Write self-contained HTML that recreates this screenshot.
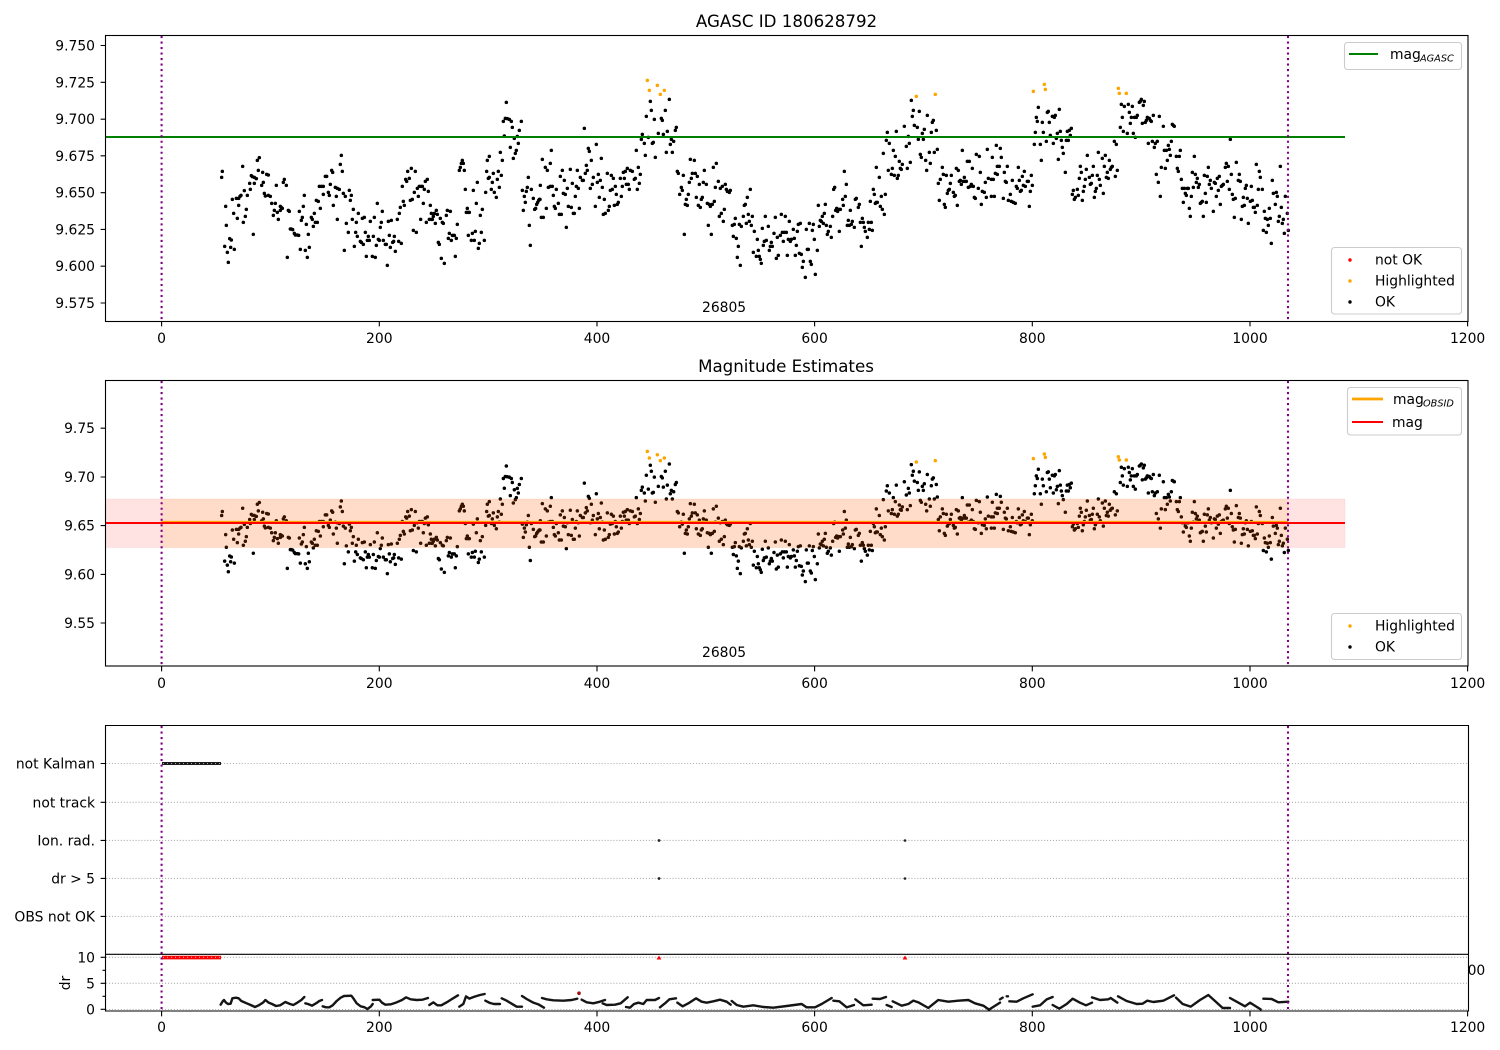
<!DOCTYPE html>
<html><head><meta charset="utf-8"><title>AGASC ID 180628792</title>
<style>
html,body{margin:0;padding:0;background:#fff}
svg{display:block}
text{font-family:"DejaVu Sans","Liberation Sans",sans-serif;font-size:13.89px;fill:#000}
.e{text-anchor:end}.m{text-anchor:middle}
.sub{font-size:9.72px;font-style:italic}
.d{fill:none;stroke-linecap:round;vector-effect:non-scaling-stroke;stroke-width:3.5}
.tr{fill:none;stroke:#151515;stroke-width:2.4;stroke-linecap:round;stroke-linejoin:round;vector-effect:non-scaling-stroke}
.t{stroke:#000;stroke-width:1.1;fill:none}
.f{fill:none;stroke:#000;stroke-width:1.1}
.g{stroke:#b0b0b0;stroke-width:1.1;stroke-dasharray:1.1 1.85;fill:none}
.o{stroke:#800080;stroke-width:2.08;stroke-dasharray:2.08 3.43;fill:none}
.l{fill:#fff;fill-opacity:.8;stroke:#ccc;stroke-width:1.1}
</style></head><body>
<svg xmlns="http://www.w3.org/2000/svg" width="1500" height="1050" viewBox="0 0 1500 1050">
<rect width="1500" height="1050" fill="#fff"/>
<defs>
<g id="ok" stroke="#000">
<path class="d" transform="translate(100 60) scale(.33333)" d="M365 352h0M367 334h0M377 439h0M379 496h0M389 536h0M394 540h0M374 559h0M392 562h0M403 568h0M382 577h0M385 607h0M397 418h0M409 415h0M416 415h0M416 436h0M401 460h0M412 475h0M423 406h0M420 409h0M428 319h0M433 392h0M442 406h0M439 448h0M436 469h0M430 487h0M460 523h0M449 370h0M451 388h0M454 347h0M457 350h0M463 352h0M463 370h0M469 356h0M472 301h0M478 293h0M475 331h0M488 337h0M490 367h0M485 376h0M500 343h0M505 345h0M493 400h0M496 408h0M505 406h0M511 409h0M515 430h0M526 430h0M523 451h0M520 466h0M532 457h0M535 478h0M529 376h0M550 367h0M553 358h0M559 376h0M541 439h0M544 442h0M547 445h0M541 451h0M565 451h0M568 454h0M562 592h0M571 507h0M574 507h0M578 509h0M583 520h0M586 525h0M592 525h0M596 526h0M598 454h0M601 568h0M610 439h0M613 406h0M607 472h0M604 481h0M619 493h0M625 523h0M628 562h0M616 571h0M622 592h0M634 472h0M637 478h0M643 460h0M640 499h0M646 487h0M652 487h0M649 421h0M655 424h0M661 445h0M658 379h0M664 379h0M670 379h0M670 403h0M676 349h0M680 349h0M685 397h0M688 406h0M691 373h0M695 331h0M698 337h0M700 436h0M706 382h0M709 409h0M712 385h0M718 388h0M712 478h0M721 313h0M724 286h0M727 334h0M730 400h0M733 571h0M736 409h0M739 490h0M745 517h0M748 391h0M751 421h0M754 406h0M757 478h0M760 448h0M763 559h0M767 517h0M769 487h0M772 529h0M775 460h0M781 544h0M784 547h0M790 553h0M787 475h0M793 472h0M796 517h0M799 589h0M802 541h0M805 529h0M808 541h0M811 484h0M817 589h0M820 529h0M823 472h0M826 592h0M829 556h0M832 430h0M835 538h0M838 541h0M841 502h0M844 487h0M847 454h0M850 541h0M856 553h0M859 553h0M862 616h0M865 484h0M868 526h0M871 562h0M874 481h0M878 547h0M881 544h0M883 529h0M886 574h0M892 478h0M896 544h0M898 460h0M901 442h0M904 550h0M907 379h0M910 424h0M913 436h0M917 358h0M920 364h0M923 334h0M928 355h0M931 421h0M934 325h0M937 418h0M940 511h0M943 397h0M946 334h0M949 517h0M952 385h0M955 409h0M958 379h0M962 478h0M964 379h0M967 379h0M970 430h0M973 388h0M976 364h0M979 487h0M982 358h0M985 394h0M988 478h0M991 436h0M994 478h0M994 460h0M997 478h0M1000 469h0M1003 460h0M1006 490h0M1009 451h0M1012 463h0M1015 547h0M1018 553h0M1021 475h0M1024 595h0M1027 487h0M1030 490h0M1033 610h0M1039 466h0M1042 451h0M1045 535h0M1048 520h0M1051 454h0M1054 541h0M1057 526h0M1060 526h0M1063 526h0M1066 589h0M1069 535h0M1072 493h0M1078 331h0M1081 322h0M1084 310h0M1087 301h0M1090 310h0M1093 331h0M1096 388h0M1102 445h0M1099 457h0M1105 457h0M1108 457h0M1105 526h0M1114 541h0M1117 520h0M1120 391h0M1123 541h0M1126 514h0M1129 430h0M1132 367h0M1135 565h0M1138 550h0M1141 466h0M1144 517h0M1147 448h0M1153 541h0M1157 397h0M1160 334h0M1162 301h0M1165 355h0M1168 289h0M1168 352h0M1174 388h0M1177 367h0M1180 340h0M1183 397h0M1189 412h0M1192 358h0M1195 334h0M1198 382h0M1201 277h0M1204 346h0M1207 301h0M1210 184h0M1213 228h0M1216 175h0M1219 127h0M1222 176h0M1228 178h0M1234 184h0M1231 262h0M1237 202h0M1240 295h0M1243 235h0M1246 280h0M1249 271h0M1252 229h0M1255 250h0M1258 211h0M1264 184h0M1267 391h0M1270 451h0M1273 409h0M1276 427h0M1279 394h0M1282 382h0M1285 352h0M1288 496h0M1291 556h0M1294 388h0M1300 415h0M1304 448h0M1307 445h0M1310 433h0M1313 427h0M1316 421h0M1318 418h0"/>
<path class="d" transform="translate(540 60) scale(.33333)" d="M1 376h0M0 418h0M7 298h0M16 322h0M22 331h0M31 310h0M34 271h0M25 382h0M31 379h0M37 379h0M40 406h0M49 388h0M19 445h0M43 439h0M46 445h0M55 430h0M4 472h0M10 472h0M58 463h0M64 463h0M79 502h0M61 349h0M67 331h0M73 361h0M82 385h0M70 400h0M76 403h0M91 328h0M97 370h0M85 439h0M94 442h0M100 460h0M103 460h0M106 409h0M109 379h0M115 385h0M112 331h0M118 445h0M121 352h0M127 361h0M130 361h0M133 205h0M136 340h0M139 316h0M142 331h0M145 265h0M148 274h0M151 385h0M154 301h0M157 373h0M160 352h0M166 439h0M169 253h0M172 367h0M175 343h0M178 412h0M181 361h0M184 295h0M187 382h0M190 463h0M196 460h0M193 418h0M202 340h0M205 451h0M208 439h0M211 391h0M214 346h0M217 388h0M220 355h0M223 436h0M226 379h0M229 403h0M232 433h0M235 427h0M241 355h0M244 409h0M247 379h0M250 337h0M253 355h0M256 334h0M259 373h0M262 325h0M265 373h0M268 388h0M271 331h0M277 334h0M283 358h0M286 355h0M289 271h0M292 388h0M295 322h0M298 370h0M301 343h0M304 238h0M307 223h0M313 250h0M316 286h0M319 169h0M325 232h0M331 124h0M334 151h0M337 250h0M340 247h0M343 178h0M346 292h0M355 220h0M364 175h0M367 181h0M370 223h0M376 151h0M379 277h0M382 214h0M388 118h0M391 253h0M394 238h0M397 277h0M401 244h0M406 211h0M409 202h0M412 334h0M415 340h0M419 403h0M424 382h0M427 391h0M430 346h0M433 523h0M439 418h0M436 433h0M442 436h0M445 403h0M448 367h0M451 298h0M454 355h0M457 340h0M463 301h0M466 340h0M469 412h0M472 349h0M475 436h0M478 373h0M481 442h0M484 418h0M487 412h0M490 367h0M493 331h0M499 373h0M502 430h0M505 496h0M508 433h0M511 439h0M514 523h0M517 433h0M520 322h0M523 424h0M526 382h0M529 310h0M535 364h0M538 469h0M541 385h0M544 460h0M547 379h0M550 484h0M553 448h0M556 373h0M559 388h0M562 394h0M568 397h0M571 391h0M577 496h0M580 529h0M583 493h0M586 475h0M589 535h0M592 592h0M595 559h0M598 493h0M601 616h0M604 499h0M610 469h0M613 436h0M616 433h0M619 490h0M622 412h0M625 463h0M628 484h0M631 388h0M634 496h0M637 469h0M640 577h0M643 514h0M649 589h0M652 538h0M655 571h0M658 589h0M661 598h0M664 610h0M667 505h0M670 556h0M673 544h0M676 469h0M679 541h0M685 499h0M688 571h0M691 559h0M694 547h0M697 559h0M702 520h0M706 472h0M709 595h0M712 532h0M715 586h0M721 526h0M724 463h0M727 517h0M730 544h0M733 517h0M736 469h0M739 517h0M742 586h0M745 538h0M748 484h0M751 544h0M754 538h0M760 508h0M763 535h0M766 586h0M769 556h0M772 514h0M775 493h0M778 580h0M781 490h0M784 583h0M787 622h0M790 604h0M796 652h0M799 508h0M802 568h0M805 568h0M808 490h0M811 604h0M814 613h0M817 511h0M820 493h0M823 538h0M826 643h0M832 571h0M835 436h0M838 499h0M841 481h0M844 484h0M847 469h0M850 490h0M853 460h0M856 433h0M859 496h0M862 523h0M865 514h0M871 499h0M874 532h0M878 469h0M881 388h0M884 382h0M887 451h0M890 445h0M893 454h0M896 448h0M898 514h0M901 448h0M908 418h0M910 436h0M913 334h0M916 409h0M919 373h0M922 496h0M925 481h0M928 496h0M931 451h0M934 493h0M937 484h0M943 502h0M946 418h0M949 415h0M955 442h0M958 433h0M961 487h0M964 559h0M967 475h0M970 487h0M973 502h0M976 514h0M982 532h0M985 487h0M988 508h0M991 424h0M994 487h0M997 511h0M1000 388h0M1003 403h0M1006 430h0M1009 427h0M1012 427h0M1018 352h0M1009 322h0M1021 439h0M1024 409h0M1027 448h0M1030 280h0M1033 463h0M1036 403h0M1039 241h0M1042 217h0M1045 331h0M1048 250h0M1054 343h0M1057 325h0M1060 271h0M1063 346h0M1066 289h0M1069 214h0M1072 355h0M1075 346h0M1078 304h0M1081 325h0M1084 328h0M1087 313h0M1093 199h0M1099 259h0M1102 325h0M1105 229h0M1108 250h0M1111 307h0M1114 121h0M1117 169h0M1120 151h0M1123 196h0M1132 202h0M1135 238h0M1138 154h0M1141 283h0M1144 292h0M1147 220h0M1150 238h0M1153 208h0M1157 301h0M1160 331h0M1162 166h0M1168 277h0M1171 310h0M1174 217h0M1177 187h0M1180 181h0M1183 277h0M1189 211h0M1192 268h0M1195 370h0M1198 421h0M1201 358h0M1207 322h0M1210 343h0M1213 433h0M1216 442h0M1219 346h0M1222 400h0M1225 391h0M1228 388h0M1231 370h0M1234 346h0M1240 397h0M1243 409h0M1246 406h0M1249 325h0M1252 436h0M1255 331h0M1258 364h0M1261 361h0M1264 373h0M1267 271h0M1270 364h0M1273 352h0M1276 364h0M1279 364h0M1282 304h0M1285 382h0M1288 304h0M1291 379h0M1294 373h0M1297 325h0M1300 379h0M1303 412h0M1306 415h0M1309 283h0M1315 385h0M1318 289h0M1321 337h0M1324 433h0M1327 394h0M1333 397h0M1336 367h0M1339 412h0M1342 268h0M1345 355h0"/>
<path class="d" transform="translate(980 30) scale(.33333)" d="M49 346h0M61 355h0M64 382h0M37 382h0M52 409h0M58 409h0M82 409h0M46 430h0M52 433h0M73 427h0M34 448h0M40 448h0M76 454h0M79 457h0M97 451h0M115 412h0M133 424h0M127 439h0M118 451h0M109 469h0M112 475h0M121 484h0M124 481h0M130 466h0M136 469h0M142 454h0M145 454h0M154 436h0M157 466h0M151 484h0M148 529h0M34 499h0M43 499h0M70 505h0M85 511h0M91 493h0M94 514h0M100 517h0M106 520h0M163 343h0M166 307h0M169 262h0M172 274h0M175 232h0M181 343h0M184 391h0M187 277h0M190 307h0M199 334h0M202 247h0M205 244h0M208 277h0M211 316h0M217 259h0M220 340h0M223 262h0M226 256h0M229 325h0M232 310h0M235 388h0M238 238h0M241 304h0M244 331h0M247 352h0M250 370h0M256 427h0M259 331h0M262 304h0M265 331h0M268 301h0M271 316h0M274 295h0M277 493h0M280 481h0M283 508h0M286 502h0M292 478h0M295 496h0M298 445h0M301 409h0M304 427h0M307 511h0M310 484h0M313 469h0M316 448h0M319 418h0M322 376h0M328 442h0M331 463h0M334 460h0M337 436h0M340 409h0M343 502h0M346 484h0M349 475h0M352 436h0M355 367h0M358 448h0M361 466h0M367 385h0M370 490h0M373 409h0M376 376h0M379 442h0M382 427h0M385 445h0M388 391h0M391 418h0M394 412h0M397 409h0M403 334h0M406 439h0M409 343h0M412 421h0M421 292h0M424 223h0M427 262h0M430 304h0M433 229h0M442 310h0M445 223h0M448 247h0M451 280h0M454 262h0M457 229h0M460 310h0M463 262h0M466 322h0M469 262h0M472 256h0M478 217h0M481 214h0M484 208h0M487 280h0M490 226h0M493 214h0M496 277h0M499 271h0M502 262h0M505 340h0M508 265h0M511 271h0M514 274h0M517 334h0M520 256h0M523 352h0M526 340h0M529 433h0M532 334h0M535 457h0M538 259h0M541 499h0M544 412h0M550 289h0M553 361h0M556 415h0M559 361h0M562 391h0M565 346h0M568 358h0M571 376h0M574 334h0M577 283h0M580 286h0M583 289h0M589 379h0M592 415h0M595 424h0M598 379h0M601 361h0M604 448h0M607 475h0M610 517h0M613 475h0M616 490h0M619 496h0M622 475h0M625 475h0M628 535h0M631 559h0M634 499h0M637 427h0M640 472h0M643 379h0M646 433h0M649 457h0M652 445h0M655 472h0M658 463h0M661 520h0M664 517h0M667 514h0M670 559h0M673 436h0M676 490h0M679 517h0M682 439h0M685 412h0M688 463h0M691 451h0M694 475h0M700 544h0M703 457h0M706 460h0M709 499h0M712 445h0M715 481h0M718 439h0M721 523h0M724 469h0M727 466h0M730 463h0M736 412h0M739 400h0M742 454h0M745 409h0M748 478h0M751 328h0M754 433h0M757 493h0M760 508h0M763 562h0M766 505h0M769 397h0M775 451h0M778 433h0M781 454h0M784 568h0M787 529h0M790 502h0M793 526h0M796 475h0M799 466h0M802 505h0M805 580h0M811 514h0M814 469h0M817 511h0M820 532h0M823 532h0M826 547h0M829 403h0M832 526h0M835 478h0M838 424h0M841 442h0M847 478h0M850 601h0M853 544h0M856 565h0M859 607h0M862 568h0M865 586h0M868 535h0M871 565h0M874 640h0M877 451h0M880 490h0M886 523h0M889 487h0M892 499h0M895 574h0M898 559h0M901 409h0M904 532h0M907 580h0M910 568h0M913 610h0M916 499h0M922 550h0M925 601h0"/>
</g>
<g id="hi" stroke="#ffa500">
<path class="d" transform="translate(540 60) scale(.33333)" d="M322 61h0M328 91h0M352 76h0M361 103h0M373 91h0M1129 109h0M1186 103h0"/>
<path class="d" transform="translate(980 30) scale(.33333)" d="M160 184h0M193 163h0M196 178h0M415 175h0M418 190h0M439 190h0"/>
</g>
</defs>

<!-- Panel 1 -->
<use href="#ok"/><use href="#hi"/>
<path d="M105 137H1345" stroke="#008000" stroke-width="2.08" fill="none"/>
<path class="o" d="M161.6 36V321M1288 36V321"/>
<text class="m" x="786.5" y="27" style="font-size:16.67px">AGASC ID 180628792</text>
<text x="702" y="312">26805</text>
<rect class="f" x="105.5" y="35.5" width="1362.5" height="286"/>
<path class="t" d="M100.6 45.5H105M100.6 82.3H105M100.6 119.2H105M100.6 155.8H105M100.6 192.7H105M100.6 229.4H105M100.6 266.2H105M100.6 303H105"/>
<text class="e" x="95" y="50.5">9.750</text><text class="e" x="95" y="87.3">9.725</text><text class="e" x="95" y="124.2">9.700</text><text class="e" x="95" y="160.8">9.675</text><text class="e" x="95" y="197.7">9.650</text><text class="e" x="95" y="234.4">9.625</text><text class="e" x="95" y="271.2">9.600</text><text class="e" x="95" y="308">9.575</text>
<path class="t" d="M161.6 321V326.4M379.3 321V326.4M597 321V326.4M814.6 321V326.4M1032.3 321V326.4M1250 321V326.4M1467.6 321V326.4"/>
<text class="m" x="161.6" y="343">0</text><text class="m" x="379.3" y="343">200</text><text class="m" x="597" y="343">400</text><text class="m" x="814.6" y="343">600</text><text class="m" x="1032.3" y="343">800</text><text class="m" x="1250" y="343">1000</text><text class="m" x="1467.6" y="343">1200</text>
<rect class="l" x="1344.5" y="42.5" width="117" height="27" rx="3"/>
<path d="M1349 54H1378" stroke="#008000" stroke-width="2.08"/>
<text x="1390" y="59">mag</text><text class="sub" x="1420" y="61.5">AGASC</text>
<rect class="l" x="1331.5" y="247.5" width="130" height="66.5" rx="3"/>
<circle cx="1350" cy="260" r="1.7" fill="#f00"/><circle cx="1350" cy="281" r="1.7" fill="#ffa500"/><circle cx="1350" cy="302" r="1.7" fill="#000"/>
<text x="1375" y="264.5">not OK</text><text x="1375" y="285.5">Highlighted</text><text x="1375" y="306.5">OK</text>

<!-- Panel 2 -->
<g transform="translate(0 398.3) scale(1 .661)"><use href="#ok"/><use href="#hi"/></g>
<rect x="105.5" y="499" width="1239.5" height="48.5" fill="#f00" fill-opacity=".11" stroke="#f00" stroke-opacity=".05"/>
<rect x="161.6" y="499" width="1126.4" height="48.5" fill="#ffa500" fill-opacity=".11" stroke="#ffa500" stroke-opacity=".06"/>
<path d="M161.6 522.3H1288" stroke="#ffa500" stroke-width="2.8" fill="none"/>
<path d="M105 523H1345" stroke="#f00" stroke-width="2.08" fill="none"/>
<path class="o" d="M161.6 381V666M1288 381V666"/>
<text class="m" x="786" y="372" style="font-size:16.67px">Magnitude Estimates</text>
<text x="702" y="657">26805</text>
<rect class="f" x="105.5" y="380.5" width="1362.5" height="285.5"/>
<path class="t" d="M100.6 428.2H105M100.6 477H105M100.6 525.6H105M100.6 574.4H105M100.6 623H105"/>
<text class="e" x="95" y="433.2">9.75</text><text class="e" x="95" y="482">9.70</text><text class="e" x="95" y="530.6">9.65</text><text class="e" x="95" y="579.4">9.60</text><text class="e" x="95" y="628">9.55</text>
<path class="t" d="M161.6 666V671.4M379.3 666V671.4M597 666V671.4M814.6 666V671.4M1032.3 666V671.4M1250 666V671.4M1467.6 666V671.4"/>
<text class="m" x="161.6" y="688">0</text><text class="m" x="379.3" y="688">200</text><text class="m" x="597" y="688">400</text><text class="m" x="814.6" y="688">600</text><text class="m" x="1032.3" y="688">800</text><text class="m" x="1250" y="688">1000</text><text class="m" x="1467.6" y="688">1200</text>
<rect class="l" x="1347.5" y="387.5" width="114" height="47.5" rx="3"/>
<path d="M1352 399H1383" stroke="#ffa500" stroke-width="2.8"/>
<path d="M1352 422H1383" stroke="#f00" stroke-width="2.1"/>
<text x="1393" y="404">mag</text><text class="sub" x="1423" y="406.5">OBSID</text>
<text x="1392" y="427">mag</text>
<rect class="l" x="1331.5" y="613.5" width="130" height="46" rx="3"/>
<circle cx="1350" cy="626" r="1.7" fill="#ffa500"/><circle cx="1350" cy="647" r="1.7" fill="#000"/>
<text x="1375" y="630.5">Highlighted</text><text x="1375" y="651.5">OK</text>

<!-- Panel 3 -->
<text class="m" x="1467.6" y="975">1200</text>
<rect x="105" y="954" width="1363" height="57" fill="#fff"/>
<path class="g" d="M106 763.5H1468M106 802.3H1468M106 840.4H1468M106 878.4H1468M106 916.4H1468"/>
<path d="M162 763.5H221" stroke="#1a1a1a" stroke-width="3" fill="none"/>
<path d="M163 763.5H221" stroke="#aaa" stroke-width="1" stroke-dasharray="1 3" fill="none"/>
<circle cx="659" cy="840.5" r="1.4" fill="#222"/><circle cx="659" cy="878.5" r="1.4" fill="#222"/><circle cx="905" cy="840.5" r="1.3" fill="#222"/><circle cx="905" cy="878.5" r="1.3" fill="#222"/>
<path class="t" d="M100.6 763.5H105M100.6 802.3H105M100.6 840.4H105M100.6 878.4H105M100.6 916.4H105"/>
<text class="e" x="95" y="768.5">not Kalman</text><text class="e" x="95" y="807.3">not track</text><text class="e" x="95" y="845.4">Ion. rad.</text><text class="e" x="95" y="883.4">dr &gt; 5</text><text class="e" x="95" y="921.4">OBS not OK</text>

<!-- Panel 4 -->
<path class="g" d="M106 957.3H1468M106 983.3H1468M106 1009.5H1468"/>
<path d="M162 957.6H221" stroke="#f00" stroke-width="3.6" fill="none"/>
<path d="M163 957.3H221" stroke="#f5b0b0" stroke-width="1" stroke-dasharray="1 3" fill="none"/>
<path d="M659 955.5l2.4 4h-4.8zM905 955.5l2.4 4h-4.8z" fill="#f00"/>
<g transform="translate(0 930) scale(.33333)">
<path class="tr" d="M662 224L668 214 672 210 678 218 684 222 692 221 697 205 708 203 716 205 724 213 740 220 752 225 765 231 776 226 790 217 796 210 806 218 816 222 828 228 840 226 856 216 870 222 880 225 892 218 904 210 913 201M916 220L924 222 936 227 948 220 958 213 966 210M968 229L978 232 988 232 998 226 1010 213 1022 203 1032 198 1054 197 1060 205 1070 220 1082 229 1094 232 1102 237 1112 230 1118 222M1118 210L1138 209 1146 218 1156 224 1172 223 1190 217 1206 210 1218 202 1232 208 1250 210 1268 209 1284 204M1288 225L1300 217 1312 226 1324 226 1340 217 1356 207 1374 196M1378 230L1390 222 1398 199 1408 206 1424 200 1440 195 1454 192M1456 212L1470 219 1482 222 1500 222"/>
</g>
<g transform="translate(500 930) scale(.33333)">
<path class="tr" d="M5 205L20 212 40 224 50 230 66 230M66 198L80 207 100 218 115 223 132 233M126 204L140 208 160 211 190 212 215 210 232 206M245 209L260 217 280 220 300 215 315 210M308 220L320 225 345 224 362 220 383 202M378 231L390 233 402 222 415 218 430 222 440 210 465 210 477 204M480 232L495 220 508 208 528 205M532 218L548 229 565 220 588 205 605 215 620 218 640 214 660 209 680 215 692 224M695 213L710 225 730 230 760 226 790 231 820 233 860 228 905 222 920 232 945 232 965 222 995 204M1000 212L1018 214 1040 232 1062 225M1066 208L1090 226 1115 224M1118 206L1140 207 1158 201M1160 225L1175 231M1178 214L1205 227 1225 222 1240 212 1255 217 1285 234 1315 210 1345 215 1375 212 1405 210 1425 220 1450 227 1467 239 1500 218"/>
</g>
<g transform="translate(1000 930) scale(.33333)">
<path class="tr" d="M0 208L8 203M20 199L24 199M28 214L50 215 70 205 98 193M98 230L120 226 140 208 158 201M158 225L178 236 200 222 218 206 240 218 258 226 276 218M276 202L300 210 325 208 332 204 352 218M354 199L380 213 410 222 428 221 442 212 460 216 490 212 522 196M528 203L548 222 572 230 600 210 625 195 645 213 668 234 690 234M690 204L710 215 735 229 750 218 782 238M790 206L815 207 835 217 865 215"/>
</g>
<circle cx="579" cy="993.2" r="1.8" fill="#a01010"/>
<path class="o" d="M161.6 726V1011M1288 726V1011"/>
<path d="M105.5 725.5H1468.5V1011H105.5Z" class="f"/>
<path d="M105 954.3H1468.5" stroke="#000" stroke-width="1.1" fill="none"/>
<path class="t" d="M100.6 957.3H105M100.6 983.3H105M100.6 1009.3H105M102.5 970.3H105M102.5 996.3H105"/>
<text class="e" x="95" y="962.3">10</text><text class="e" x="95" y="988.3">5</text><text class="e" x="95" y="1014.3">0</text>
<text class="m" transform="translate(70 983) rotate(-90)">dr</text>
<path class="t" d="M161.6 1011V1016.4M379.3 1011V1016.4M597 1011V1016.4M814.6 1011V1016.4M1032.3 1011V1016.4M1250 1011V1016.4M1467.6 1011V1016.4"/>
<text class="m" x="161.6" y="1032">0</text><text class="m" x="379.3" y="1032">200</text><text class="m" x="597" y="1032">400</text><text class="m" x="814.6" y="1032">600</text><text class="m" x="1032.3" y="1032">800</text><text class="m" x="1250" y="1032">1000</text><text class="m" x="1467.6" y="1032">1200</text>
</svg>
</body></html>
